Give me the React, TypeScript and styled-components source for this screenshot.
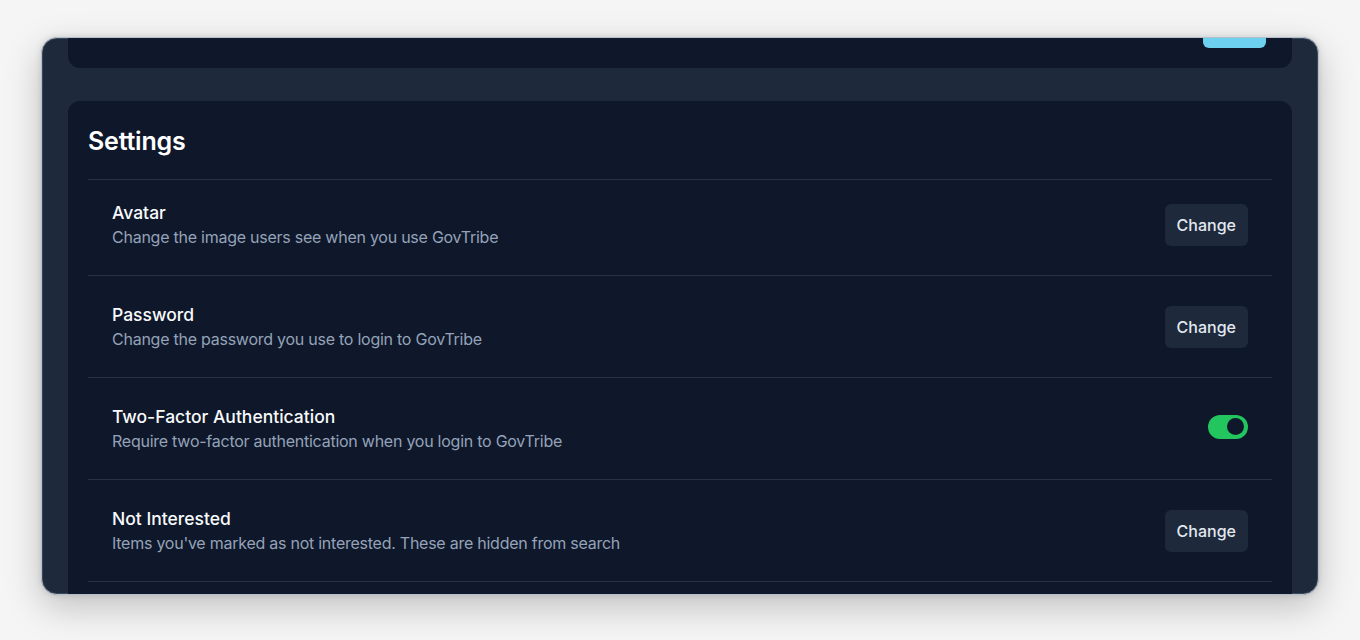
import styled, { createGlobalStyle } from "styled-components";

const GlobalStyle = createGlobalStyle`
  html, body {
    margin: 0;
    padding: 0;
    background: #f5f5f5;
    font-family: Inter, "Noto Sans", sans-serif;
    -webkit-font-smoothing: antialiased;
  }
`;

const Page = styled.div`
  width: 1360px;
  height: 640px;
  padding: 37px 41px 0;
  box-sizing: border-box;
  overflow: hidden;
`;

const Window = styled.div`
  width: 1278px;
  height: 558px;
  box-sizing: border-box;
  background: #1e293b;
  border: 1px solid #b4bfcd;
  border-radius: 16px;
  box-shadow: inset 0 0 0 1px #3a4659, 0 12px 36px rgba(0, 0, 0, 0.22),
    0 0 6px rgba(0, 0, 0, 0.12);
  overflow: hidden;
  padding: 0 26px;
  display: flex;
  flex-direction: column;
  gap: 33px;
`;

const TopCard = styled.div`
  height: 30px;
  flex-shrink: 0;
  background: #0f172a;
  border-radius: 0 0 12px 12px;
  display: flex;
  justify-content: flex-end;
  align-items: flex-start;
  padding-right: 26px;
`;

const SaveButton = styled.div`
  width: 63px;
  height: 10px;
  background: #6dd0ee;
  border-radius: 0 0 6px 6px;
`;

const Card = styled.section`
  background: #0f172a;
  border-radius: 12px 12px 0 0;
  padding: 20px 20px 0;
  flex: 1;
`;

const Heading = styled.h2`
  margin: 0;
  padding: 4px 0 22px;
  font-size: 25px;
  line-height: 32px;
  font-weight: 600;
  color: #ffffff;
  letter-spacing: -0.2px;
  border-bottom: 1px solid #263244;
`;

const Row = styled.div`
  display: flex;
  align-items: center;
  justify-content: space-between;
  padding: 27px 24px 26px;
  border-bottom: 1px solid #263244;

  &:first-of-type {
    padding-top: 21px;
  }
`;

const Text = styled.div`
  display: flex;
  flex-direction: column;
`;

const Title = styled.div`
  font-size: 17.5px;
  line-height: 24px;
  font-weight: 500;
  color: #f8fafc;
`;

const Description = styled.div`
  font-size: 16px;
  line-height: 24px;
  color: #94a3b8;
  letter-spacing: -0.25px;
`;

const Button = styled.button`
  height: 42px;
  padding: 0 12px;
  border: none;
  border-radius: 6px;
  background: #1e293b;
  color: #e2e8f0;
  font-family: inherit;
  font-size: 16px;
  font-weight: 500;
  cursor: pointer;
`;

const Toggle = styled.div<{ $on: boolean }>`
  width: 40px;
  height: 24px;
  border-radius: 12px;
  background: ${(p) => (p.$on ? "#22c55e" : "#334155")};
  display: flex;
  align-items: center;
  justify-content: ${(p) => (p.$on ? "flex-end" : "flex-start")};
  padding: 0 4px;
  box-sizing: border-box;
  margin-top: -5px;
`;

const Knob = styled.div`
  width: 17px;
  height: 17px;
  border-radius: 50%;
  background: #0f172a;
`;

type Setting = {
  title: string;
  description: string;
  kind: "button" | "toggle";
};

const settings: Setting[] = [
  {
    title: "Avatar",
    description: "Change the image users see when you use GovTribe",
    kind: "button",
  },
  {
    title: "Password",
    description: "Change the password you use to login to GovTribe",
    kind: "button",
  },
  {
    title: "Two-Factor Authentication",
    description: "Require two-factor authentication when you login to GovTribe",
    kind: "toggle",
  },
  {
    title: "Not Interested",
    description:
      "Items you've marked as not interested. These are hidden from search",
    kind: "button",
  },
];

const App = () => {
  return (
    <>
      <GlobalStyle />
      <Page>
        <Window>
          <TopCard>
            <SaveButton />
          </TopCard>
          <Card>
            <Heading>Settings</Heading>
            {settings.map((s) => (
              <Row key={s.title}>
                <Text>
                  <Title>{s.title}</Title>
                  <Description>{s.description}</Description>
                </Text>
                {s.kind === "button" ? (
                  <Button>Change</Button>
                ) : (
                  <Toggle $on>
                    <Knob />
                  </Toggle>
                )}
              </Row>
            ))}
          </Card>
        </Window>
      </Page>
    </>
  );
};

export default App;
